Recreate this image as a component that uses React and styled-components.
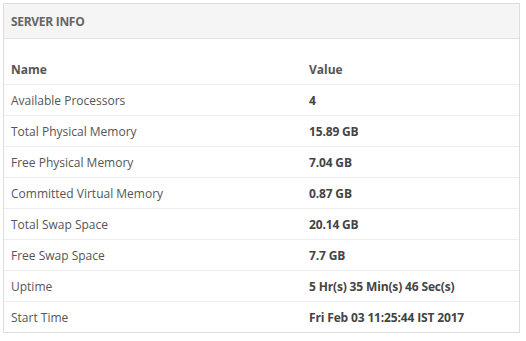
import React from 'react';
import styled, { createGlobalStyle } from 'styled-components';

const GlobalStyle = createGlobalStyle`
  body {
    margin: 0;
    background: #fff;
    font-family: 'Open Sans', 'Liberation Sans', Arial, sans-serif;
  }
`;

const Page = styled.div`
  padding: 3px 6px 0 3px;
`;

const Panel = styled.div`
  border: 1px solid #ddd;
  background: #fff;
`;

const Heading = styled.div`
  height: 34px;
  display: flex;
  align-items: center;
  padding: 0 7px;
  background: #f5f5f5;
  border-bottom: 1px solid #e2e2e2;
  color: #666;
  font-size: 12px;
  font-weight: 700;
  text-transform: uppercase;
  letter-spacing: -0.3px;
`;

const Body = styled.div`
  padding-top: 15px;
`;

const Table = styled.table`
  width: 100%;
  border-collapse: collapse;
  table-layout: fixed;
  font-size: 12px;
  color: #555;
`;

const Th = styled.th`
  text-align: left;
  font-weight: 700;
  height: 30px;
  padding: 0 7px;
  width: ${p => p.$width || 'auto'};
`;

const Row = styled.tr`
  border-top: 1px solid #eee;
`;

const Td = styled.td`
  height: 30px;
  padding: 0 7px;
  font-weight: ${p => (p.$bold ? 700 : 400)};
  color: ${p => (p.$bold ? '#444' : '#555')};
  letter-spacing: ${p => (p.$bold ? '-0.15px' : '0')};
`;

const rows = [
  ['Available Processors', '4'],
  ['Total Physical Memory', '15.89 GB'],
  ['Free Physical Memory', '7.04 GB'],
  ['Committed Virtual Memory', '0.87 GB'],
  ['Total Swap Space', '20.14 GB'],
  ['Free Swap Space', '7.7 GB'],
  ['Uptime', '5 Hr(s) 35 Min(s) 46 Sec(s)'],
  ['Start Time', 'Fri Feb 03 11:25:44 IST 2017'],
];

export default function App() {
  return (
    <Page>
      <GlobalStyle />
      <Panel>
        <Heading>Server Info</Heading>
        <Body>
          <Table>
            <thead>
              <tr>
                <Th $width="284px">Name</Th>
                <Th>Value</Th>
              </tr>
            </thead>
            <tbody>
              {rows.map(([name, value]) => (
                <Row key={name}>
                  <Td>{name}</Td>
                  <Td $bold>{value}</Td>
                </Row>
              ))}
            </tbody>
          </Table>
        </Body>
      </Panel>
    </Page>
  );
}
